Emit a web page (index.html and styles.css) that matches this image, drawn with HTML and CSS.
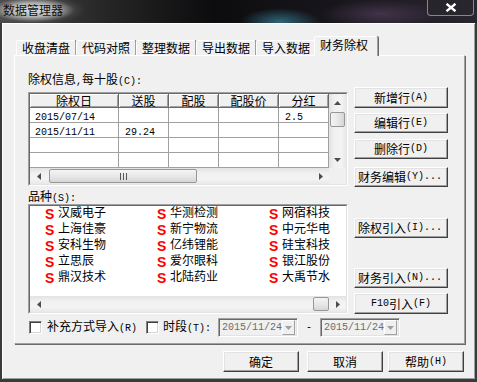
FILE: index.html
```html
<!DOCTYPE html>
<html>
<head>
<meta charset="utf-8">
<link rel="stylesheet" href="styles.css">
</head>
<body>
<div class="titlebar">
  <span class="title">数据管理器</span>
  <div class="close">
    <svg width="12" height="9" viewBox="0 0 12 9"><path d="M1.5 0.8 L10.5 8.2 M10.5 0.8 L1.5 8.2" stroke="#fff" stroke-width="2.4" fill="none"/></svg>
  </div>
</div>
<div class="client">
  <div class="tabs">
    <div class="tab">收盘清盘</div>
    <div class="tab">代码对照</div>
    <div class="tab">整理数据</div>
    <div class="tab">导出数据</div>
    <div class="tab">导入数据</div>
    <div class="tab sel">财务除权</div>
  </div>
  <div class="panel">
    <div class="top">
      <div class="leftcol">
        <div class="lbl l1">除权信息<span class="m">,</span>每十股<span class="m">(C):</span></div>
        <div class="sunken grid">
          <div class="sunken-in gtable">
            <div class="gmain">
              <div class="grow ghead">
                <div class="hc c1">除权日</div>
                <div class="hc c2">送股</div>
                <div class="hc c3">配股</div>
                <div class="hc c4">配股价</div>
                <div class="hc c5">分红</div>
              </div>
              <div class="grow">
                <div class="gc c1"><span class="m">2015/07/14</span></div>
                <div class="gc c2"></div>
                <div class="gc c3"></div>
                <div class="gc c4"></div>
                <div class="gc c5"><span class="m">2.5</span></div>
              </div>
              <div class="grow">
                <div class="gc c1"><span class="m">2015/11/11</span></div>
                <div class="gc c2"><span class="m">29.24</span></div>
                <div class="gc c3"></div>
                <div class="gc c4"></div>
                <div class="gc c5"></div>
              </div>
              <div class="grow">
                <div class="gc c1"></div><div class="gc c2"></div><div class="gc c3"></div><div class="gc c4"></div><div class="gc c5"></div>
              </div>
              <div class="grow">
                <div class="gc c1"></div><div class="gc c2"></div><div class="gc c3"></div><div class="gc c4"></div><div class="gc c5"></div>
              </div>
            </div>
            <div class="vscroll">
              <div class="sarrow"><svg width="7" height="4" viewBox="0 0 7 4"><polygon points="0,4 7,4 3.5,0" fill="#4d4d4d"/></svg></div>
              <div class="vtrack"><div class="vthumb"></div></div>
              <div class="sarrow"><svg width="7" height="4" viewBox="0 0 7 4"><polygon points="0,0 7,0 3.5,4" fill="#4d4d4d"/></svg></div>
            </div>
            <div class="hscroll">
              <div class="sarrow h"><svg width="4" height="7" viewBox="0 0 4 7"><polygon points="4,0 4,7 0,3.5" fill="#4d4d4d"/></svg></div>
              <div class="htrack"><div class="hthumb g1"><span class="grip"></span></div></div>
              <div class="sarrow h"><svg width="4" height="7" viewBox="0 0 4 7"><polygon points="0,0 0,7 4,3.5" fill="#4d4d4d"/></svg></div>
            </div>
            <div class="corner"></div>
          </div>
        </div>
        <div class="lbl l2">品种<span class="m">(S):</span></div>
        <div class="sunken list">
          <div class="sunken-in listin">
            <div class="rows">
              <div class="item"><span class="s">S</span>汉威电子</div>
              <div class="item"><span class="s">S</span>上海佳豪</div>
              <div class="item"><span class="s">S</span>安科生物</div>
              <div class="item"><span class="s">S</span>立思辰</div>
              <div class="item"><span class="s">S</span>鼎汉技术</div>
              <div class="item"><span class="s">S</span>华测检测</div>
              <div class="item"><span class="s">S</span>新宁物流</div>
              <div class="item"><span class="s">S</span>亿纬锂能</div>
              <div class="item"><span class="s">S</span>爱尔眼科</div>
              <div class="item"><span class="s">S</span>北陆药业</div>
              <div class="item"><span class="s">S</span>网宿科技</div>
              <div class="item"><span class="s">S</span>中元华电</div>
              <div class="item"><span class="s">S</span>硅宝科技</div>
              <div class="item"><span class="s">S</span>银江股份</div>
              <div class="item"><span class="s">S</span>大禹节水</div>
            </div>
            <div class="hscroll lscroll">
              <div class="sarrow h"><svg width="4" height="7" viewBox="0 0 4 7"><polygon points="4,0 4,7 0,3.5" fill="#4d4d4d"/></svg></div>
              <div class="htrack end"><div class="hthumb g2"></div></div>
              <div class="sarrow h"><svg width="4" height="7" viewBox="0 0 4 7"><polygon points="0,0 0,7 4,3.5" fill="#4d4d4d"/></svg></div>
            </div>
          </div>
        </div>
      </div>
      <div class="rightcol">
        <div class="btn b1">新增行<span class="m">(A)</span></div>
        <div class="btn b2">编辑行<span class="m">(E)</span></div>
        <div class="btn b3">删除行<span class="m">(D)</span></div>
        <div class="btn b4">财务编辑<span class="m">(Y)...</span></div>
        <div class="btn b5">除权引入<span class="m">(I)...</span></div>
        <div class="btn b6">财务引入<span class="m">(N)...</span></div>
        <div class="btn b7"><span class="m">F10</span>引入<span class="m">(F)</span></div>
      </div>
    </div>
    <div class="opts">
      <span class="cb cb1"></span><span class="otext">补充方式导入<span class="m">(R)</span></span>
      <span class="cb cb2"></span><span class="otext">时段<span class="m">(T):</span></span>
      <div class="date d1"><span class="dtext m">2015/11/24</span><span class="ddrop"><svg width="7" height="4" viewBox="0 0 7 4"><polygon points="0,0 7,0 3.5,4" fill="#a0a0a0"/></svg></span></div>
      <span class="dash m">-</span>
      <div class="date d2"><span class="dtext m">2015/11/24</span><span class="ddrop"><svg width="7" height="4" viewBox="0 0 7 4"><polygon points="0,0 7,0 3.5,4" fill="#a0a0a0"/></svg></span></div>
    </div>
  </div>
  <div class="footer">
    <div class="btn fbtn ok">确定</div>
    <div class="btn fbtn">取消</div>
    <div class="btn fbtn">帮助<span class="m">(H)</span></div>
  </div>
</div>
</body>
</html>
```
FILE: styles.css
```css
* { box-sizing: border-box; }
html, body { margin: 0; padding: 0; }
body {
  width: 477px;
  height: 382px;
  overflow: hidden;
  background: #111;
  font-family: "Noto Sans CJK SC", sans-serif;
  font-size: 12px;
  line-height: 14px;
  color: #000;
}
.m { font-family: "Liberation Mono", monospace; font-size: 10px; }

.titlebar {
  height: 23px;
  display: flex;
  justify-content: space-between;
  align-items: flex-start;
  background:
    radial-gradient(ellipse 52px 15px at 33px 10px, rgba(225,225,225,1) 0%, rgba(190,190,190,0.9) 45%, rgba(90,90,90,0.35) 80%, rgba(60,60,60,0) 100%),
    radial-gradient(ellipse 40px 14px at 280px 22px, rgba(70,170,200,0.55), rgba(0,0,0,0) 100%),
    radial-gradient(ellipse 60px 14px at 380px 14px, rgba(110,80,120,0.45), rgba(0,0,0,0) 100%),
    linear-gradient(90deg, #4a4a4a 0%, #262626 22%, #0c0c0e 45%, #18161c 70%, #2a2630 100%);
}
.title { padding: 3px 0 0 3px; color: #101010; font-size: 12px; line-height: 14px; }
.close {
  width: 47px;
  height: 16px;
  margin-right: 3px;
  border: 1px solid rgba(170,170,170,0.75);
  border-top: none;
  border-radius: 0 0 4px 4px;
  display: flex;
  align-items: center;
  justify-content: center;
  background: rgba(40,40,44,0.6);
}

.client {
  height: 359px;
  background: #f0f0f0;
  border-style: solid;
  border-color: #3a3a3a;
  border-width: 0 2px 3px 2px;
  box-shadow: inset 1px 1px 0 #fff, inset -1px -1px 0 #a0a0a0;
  padding: 13px 0 0 12px;
}

.tabs { display: flex; align-items: flex-end; height: 19px; padding-left: 2px; }
.tab {
  width: 60px;
  height: 15px;
  border: 1px solid #fff;
  border-bottom: none;
  border-right-color: #a0a0a0;
  box-shadow: 1px 0 0 #696969;
  border-radius: 2px 2px 0 0;
  text-align: center;
  line-height: 13px;
  background: #f0f0f0;
}
.tab.sel {
  width: 64px;
  height: 20px;
  margin: 0 -2px -1px;
  position: relative;
  z-index: 1;
  line-height: 16px;
  padding-right: 4px;
}

.panel {
  width: 451px;
  height: 289px;
  border: 1px solid;
  border-color: #fff #a0a0a0 #a0a0a0 #fff;
  box-shadow: 1px 1px 0 #696969;
  padding-left: 13px;
}
.top { display: flex; gap: 6px; }
.leftcol { width: 320px; display: flex; flex-direction: column; }
.lbl { height: 14px; white-space: nowrap; }
.l1 { margin-top: 16px; }
.l2 { margin-top: 3px; }

.sunken { border: 1px solid; border-color: #a0a0a0 #fff #fff #a0a0a0; }
.sunken-in { border: 1px solid; border-color: #696969 #e3e3e3 #e3e3e3 #696969; height: 100%; background: #fff; }

.grid { margin-top: 6px; height: 94px; }
.gtable { display: grid; grid-template-columns: 299px 17px; grid-template-rows: 74px 16px; }
.grow { display: flex; height: 15px; }
.grow.ghead { height: 14px; }
.c1 { width: 89px; }
.c2 { width: 50px; }
.c3 { width: 50px; }
.c4 { width: 60px; }
.c5 { width: 50px; }
.hc {
  background: #f0f0f0;
  border-right: 1px solid #696969;
  border-bottom: 1px solid #696969;
  box-shadow: inset 1px 1px 0 #fff, inset -1px -1px 0 #a0a0a0;
  display: flex;
  align-items: center;
  justify-content: center;
  white-space: nowrap;
  line-height: 13px;
}
.gc {
  border-right: 1px solid #a0a0a0;
  border-bottom: 1px solid #a0a0a0;
  line-height: 14px;
  padding-left: 6px;
}
.gc.c1 { padding-left: 5px; }

.vscroll {
  display: flex;
  flex-direction: column;
  background: linear-gradient(90deg, #e2e2e2, #f0f0f0 30%, #f4f4f4 70%, #e8e8e8);
}
.sarrow { height: 17px; display: flex; align-items: center; justify-content: center; flex: none; }
.sarrow.h { width: 17px; height: 100%; }
.vtrack { flex: 1; padding-top: 1px; }
.vthumb {
  margin: 0 1px;
  height: 15px;
  border: 1px solid #979797;
  border-radius: 2px;
  background: linear-gradient(90deg, #f4f4f4, #e8e8e8 50%, #d6d6d6);
}
.hscroll {
  display: flex;
  height: 16px;
  background: linear-gradient(180deg, #e2e2e2, #f0f0f0 30%, #f4f4f4 70%, #e8e8e8);
}
.htrack { flex: 1; display: flex; align-items: center; }
.htrack.end { justify-content: flex-end; }
.hthumb {
  height: 14px;
  border: 1px solid #979797;
  border-radius: 2px;
  background: linear-gradient(180deg, #f4f4f4, #e8e8e8 50%, #d6d6d6);
  display: flex;
  align-items: center;
  justify-content: center;
}
.hthumb.g1 { width: 148px; margin-left: 2px; }
.hthumb.g2 { width: 16px; margin-right: 0; }
.grip {
  width: 7px;
  height: 7px;
  background: linear-gradient(90deg, #555 0 1px, transparent 1px 3px, #555 3px 4px, transparent 4px 6px, #555 6px 7px);
}
.corner { background: #f0f0f0; }

.list { margin-top: 1px; height: 110px; }
.listin { display: flex; flex-direction: column; }
.rows {
  flex: 1;
  padding-left: 15px;
  display: grid;
  grid-template-columns: repeat(3, 112px);
  grid-template-rows: repeat(5, 16px);
  grid-auto-flow: column;
}
.item { display: flex; align-items: center; white-space: nowrap; height: 16px; padding-bottom: 4px; font-size: 12px; }
.s {
  width: 13px;
  flex: none;
  color: #f00;
  font-family: "Liberation Sans", sans-serif;
  font-weight: bold;
  font-size: 14px;
  line-height: 14px;
  margin-top: 3px;
}
.lscroll { flex: none; }

.rightcol { width: 94px; display: flex; flex-direction: column; padding-top: 31px; }
.btn {
  height: 20px;
  background: #f0f0f0;
  border: 1px solid;
  border-color: #fff #404040 #404040 #fff;
  box-shadow: inset -1px -1px 0 #a0a0a0, inset 1px 1px 0 #e3e3e3;
  display: flex;
  align-items: center;
  justify-content: center;
  white-space: nowrap;
  flex: none;
}
.b1 { height: 21px; }
.b2 { margin-top: 5px; }
.b3 { margin-top: 6px; }
.b4 { margin-top: 8px; justify-content: flex-start; padding-left: 3px; }
.b5 { margin-top: 31px; justify-content: flex-start; padding-left: 3px; }
.b6 { margin-top: 30px; justify-content: flex-start; padding-left: 3px; }
.b7 { margin-top: 5px; height: 21px; }

.opts { display: flex; align-items: center; margin-top: 4px; height: 19px; padding-left: 1px; }
.cb {
  width: 13px;
  height: 13px;
  flex: none;
  background: #fff;
  border: 1px solid;
  border-color: #808080 #fff #fff #808080;
  box-shadow: inset 1px 1px 0 #404040, inset -1px -1px 0 #d4d4d4;
}
.otext { white-space: nowrap; }
.cb1 { margin-right: 5px; }
.cb2 { margin-left: 9px; margin-right: 4px; }
.date {
  width: 80px;
  height: 19px;
  display: flex;
  align-items: center;
  justify-content: space-between;
  border: 1px solid;
  border-color: #a0a0a0 #fff #fff #a0a0a0;
  box-shadow: inset 1px 1px 0 #696969, inset -1px -1px 0 #e3e3e3;
  background: #f0f0f0;
  padding: 0 2px 0 3px;
}
.d1 { margin-left: 7px; }
.dtext { color: #6d6d6d; }
.ddrop {
  width: 13px;
  height: 15px;
  border: 1px solid;
  border-color: #fff #a0a0a0 #a0a0a0 #fff;
  display: flex;
  align-items: center;
  justify-content: center;
}
.dash { margin: 0 8px 0 8px; }

.footer { display: flex; justify-content: flex-end; width: 451px; padding-right: 1px; margin-top: 7px; }
.fbtn { width: 76px; height: 21px; margin-left: 5px; }
.ok { margin-right: 3px; }
```
